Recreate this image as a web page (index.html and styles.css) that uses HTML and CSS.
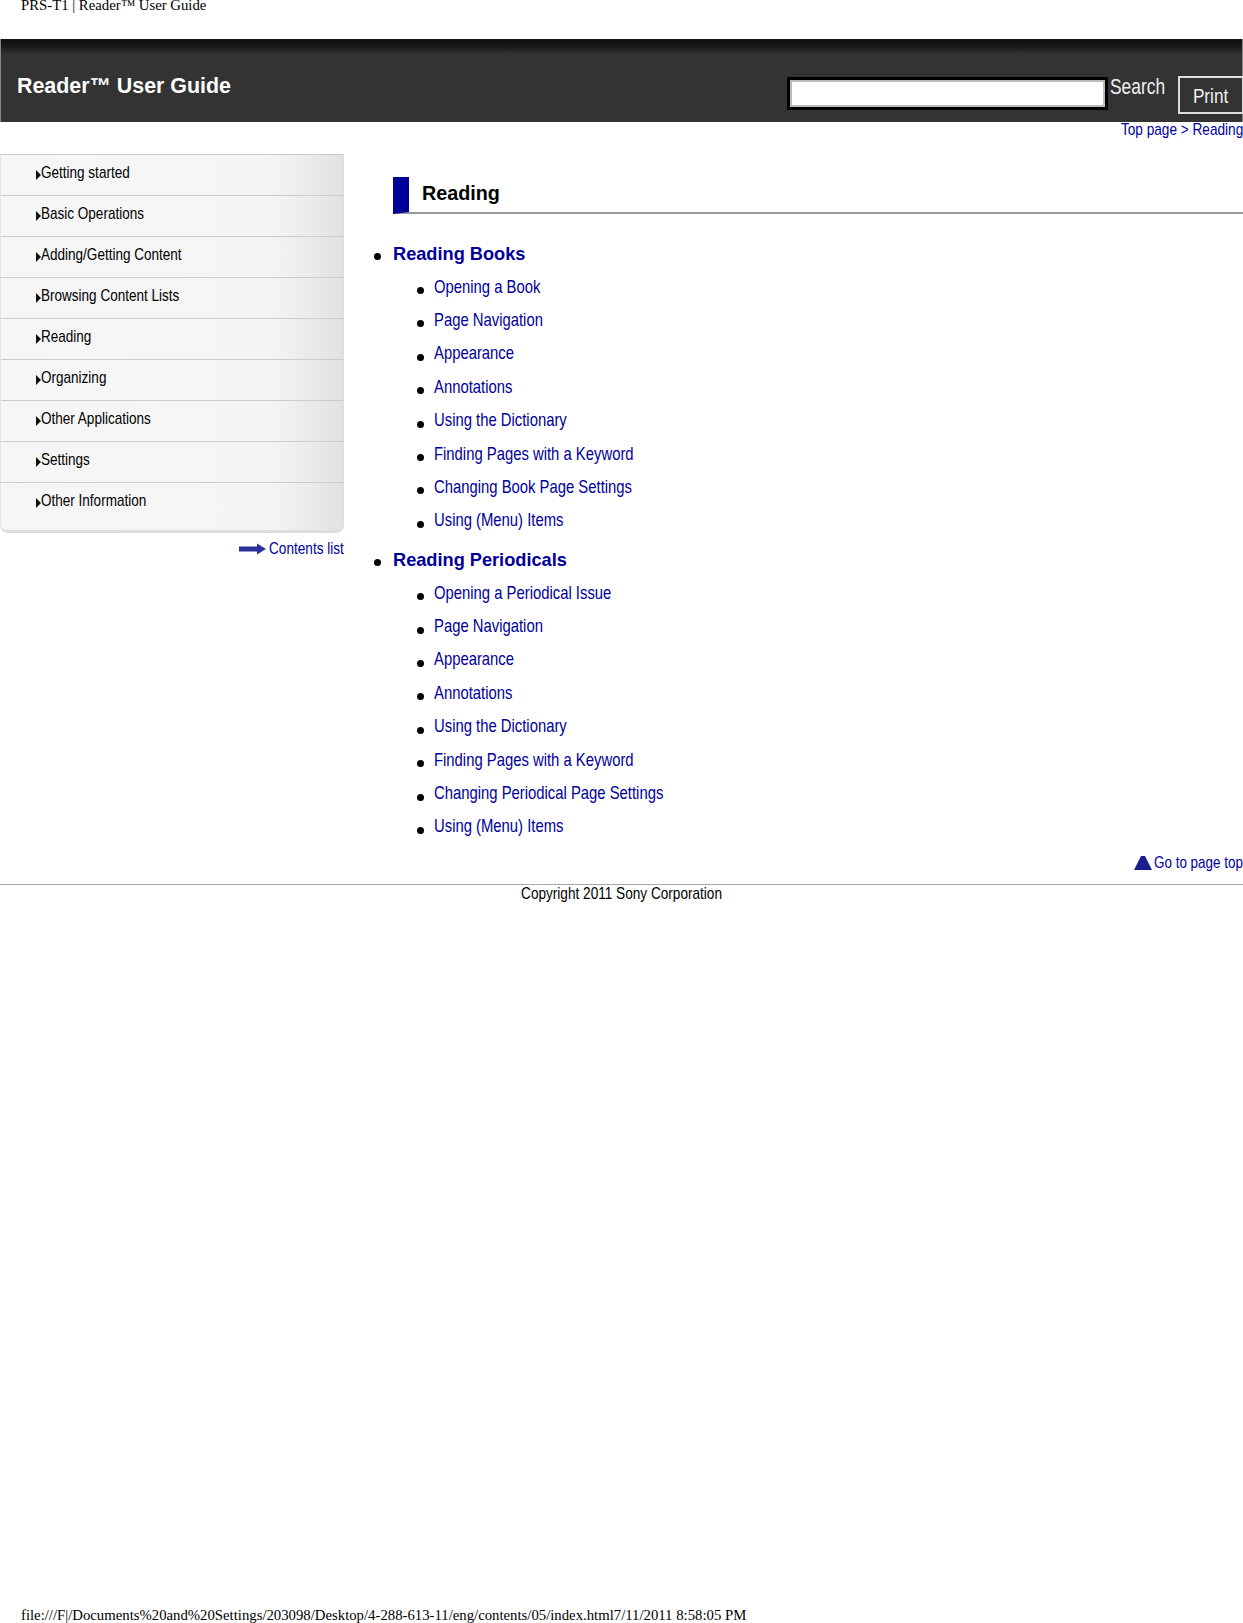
FILE: index.html
```html
<!DOCTYPE html>
<html lang="en">
<head>
<meta charset="utf-8">
<title>PRS-T1 | Reader™ User Guide</title>
<link rel="stylesheet" href="styles.css">
</head>
<body>
<div class="doc-title">PRS-T1 | Reader™ User Guide</div>
<header class="banner">
  <div class="brand">Reader™ User Guide</div>
  <form class="tools">
    <input class="search-box" type="text" aria-label="Search">
    <span class="search-label"><span class="narrow">Search</span></span>
    <button class="print" type="button"><span class="narrow mid">Print</span></button>
  </form>
</header>
<nav class="crumbs"><span class="narrow"><a href="#">Top page</a> &gt; <a href="#">Reading</a></span></nav>
<div class="columns">
  <aside class="side">
    <ul class="menu">
      <li><svg class="tri" viewBox="0 0 5 10"><path d="M0 0L5 5L0 10Z"/></svg><span class="narrow">Getting started</span></li>
      <li><svg class="tri" viewBox="0 0 5 10"><path d="M0 0L5 5L0 10Z"/></svg><span class="narrow">Basic Operations</span></li>
      <li><svg class="tri" viewBox="0 0 5 10"><path d="M0 0L5 5L0 10Z"/></svg><span class="narrow">Adding/Getting Content</span></li>
      <li><svg class="tri" viewBox="0 0 5 10"><path d="M0 0L5 5L0 10Z"/></svg><span class="narrow">Browsing Content Lists</span></li>
      <li><svg class="tri" viewBox="0 0 5 10"><path d="M0 0L5 5L0 10Z"/></svg><span class="narrow">Reading</span></li>
      <li><svg class="tri" viewBox="0 0 5 10"><path d="M0 0L5 5L0 10Z"/></svg><span class="narrow">Organizing</span></li>
      <li><svg class="tri" viewBox="0 0 5 10"><path d="M0 0L5 5L0 10Z"/></svg><span class="narrow">Other Applications</span></li>
      <li><svg class="tri" viewBox="0 0 5 10"><path d="M0 0L5 5L0 10Z"/></svg><span class="narrow">Settings</span></li>
      <li><svg class="tri" viewBox="0 0 5 10"><path d="M0 0L5 5L0 10Z"/></svg><span class="narrow">Other Information</span></li>
    </ul>
    <div class="contents-link">
      <svg class="arrow" viewBox="0 0 27 12"><path d="M0 3.5H18V0.5L27 6L18 11.5V8.5H0Z"/></svg>
      <span class="contents-text"><a class="narrow" href="#">Contents list</a></span>
    </div>
  </aside>
  <main class="content">
    <h1 class="page-head">Reading</h1>
    <ul class="groups">
      <li>
        <a class="group-title" href="#">Reading Books</a>
        <ul class="items">
          <li><a class="narrow" href="#">Opening a Book</a></li>
          <li><a class="narrow" href="#">Page Navigation</a></li>
          <li><a class="narrow" href="#">Appearance</a></li>
          <li><a class="narrow" href="#">Annotations</a></li>
          <li><a class="narrow" href="#">Using the Dictionary</a></li>
          <li><a class="narrow" href="#">Finding Pages with a Keyword</a></li>
          <li><a class="narrow" href="#">Changing Book Page Settings</a></li>
          <li><a class="narrow" href="#">Using (Menu) Items</a></li>
        </ul>
      </li>
      <li>
        <a class="group-title" href="#">Reading Periodicals</a>
        <ul class="items">
          <li><a class="narrow" href="#">Opening a Periodical Issue</a></li>
          <li><a class="narrow" href="#">Page Navigation</a></li>
          <li><a class="narrow" href="#">Appearance</a></li>
          <li><a class="narrow" href="#">Annotations</a></li>
          <li><a class="narrow" href="#">Using the Dictionary</a></li>
          <li><a class="narrow" href="#">Finding Pages with a Keyword</a></li>
          <li><a class="narrow" href="#">Changing Periodical Page Settings</a></li>
          <li><a class="narrow" href="#">Using (Menu) Items</a></li>
        </ul>
      </li>
    </ul>
  </main>
</div>
<div class="page-top">
  <svg class="up" viewBox="0 0 18 14"><path d="M7 0H11L18 14H0Z"/></svg>
  <span class="top-text"><a class="narrow" href="#">Go to page top</a></span>
</div>
<footer class="copyright"><span class="narrow mid">Copyright 2011 Sony Corporation</span></footer>
<div class="print-foot"><span>file:///F|/Documents%20and%20Settings/203098/Desktop/4-288-613-11/eng/contents/05/index.html</span><span>7/11/2011 8:58:05 PM</span></div>
</body>
</html>
```
FILE: styles.css
```css
html, body { margin: 0; padding: 0; }
body {
  height: 1623px;
  overflow: hidden;
  display: flex;
  flex-direction: column;
  background: #fff;
  color: #000;
  font-family: "Liberation Sans", sans-serif;
  font-size: 16.6px;
}
a { color: #000099; text-decoration: none; }
ul { list-style: none; margin: 0; padding: 0; }

/* No condensed family is installed, so Arial Narrow widths come from a horizontal squeeze */
.narrow {
  display: inline-block;
  white-space: nowrap;
  transform: scaleX(0.82);
  transform-origin: 0 50%;
}
.narrow.mid { transform-origin: 50% 50%; }
.menu .narrow { transform: scaleX(0.815); }
.top-text .narrow { transform: scaleX(0.81); }

.doc-title {
  height: 39px;
  padding-left: 21px;
  font-family: "Liberation Serif", serif;
  font-size: 14.75px;
  line-height: 14px;
  margin-top: -2px;
  margin-bottom: 2px;
}
.banner {
  height: 83px;
  box-sizing: border-box;
  display: flex;
  justify-content: space-between;
  border-left: 1px solid #888;
  border-right: 1px solid #888;
  background: linear-gradient(#111 0, #161616 6px, #333 15px, #333 100%);
  color: #fff;
}
.brand {
  font-weight: bold;
  font-size: 21.4px;
  padding: 35px 0 0 16px;
  line-height: 25px;
}
.tools { display: flex; align-items: flex-start; padding-top: 38px; }
.search-box {
  width: 321px;
  height: 33px;
  box-sizing: border-box;
  margin: 0 2px 0 0;
  padding: 0;
  background: #fff;
  border: 3px solid #000;
  outline: none;
  box-shadow: inset 0 0 0 2px #bbb;
}
.search-label {
  width: 55px;
  font-size: 21.2px;
  line-height: 20px;
  color: #f0f0f0;
  margin-right: 13px;
}
.print {
  width: 66px;
  height: 38px;
  box-sizing: border-box;
  margin: -1px -2px 0 0;
  padding: 2px 0 0;
  background: #333;
  color: #f0f0f0;
  border: 2px solid #ddd;
  font-family: inherit;
  font-size: 21px;
}
.crumbs { display: flex; justify-content: flex-end; line-height: 16px; color: #000099; }
.crumbs .narrow { width: 122px; }
.columns { display: flex; margin-top: 16px; }
.side { width: 344px; flex: none; }
.menu {
  background: linear-gradient(90deg, #f6f6f6 0, #f5f5f5 78%, #e2e2e2 100%);
  border-top: 1px solid #ccc;
  border-right: 1px solid #ddd;
  border-left: 1px solid #e4e4e4;
  border-bottom: 3px solid #ddd;
  border-radius: 0 0 8px 8px;
  box-sizing: border-box;
  height: 379px;
}
.menu li {
  height: 41px;
  box-sizing: border-box;
  padding: 9px 0 0 35px;
  line-height: 18px;
  border-bottom: 1px solid #ccc;
  display: flex;
  align-items: flex-start;
}
.menu li:last-child { border-bottom: 0; }
.tri { width: 5px; height: 10px; margin-top: 6px; fill: #111; flex: none; }
.contents-link {
  display: flex;
  justify-content: flex-end;
  align-items: center;
  gap: 3px;
  height: 20px;
  margin-top: 6px;
}
.contents-text { width: 75.5px; }
.arrow { width: 27px; height: 12px; fill: #2b2f9c; }
.content { flex: 1; min-width: 0; padding-top: 23px; }
.page-head {
  margin: 0 0 0 49px;
  height: 37px;
  box-sizing: border-box;
  border-bottom: 2px solid #999;
  border-left: 16px solid #000099;
  padding: 4px 0 0 13px;
  font-size: 19.75px;
  line-height: 25px;
}
.groups { margin-top: 29px; }
.groups > li { padding-left: 49px; position: relative; margin-bottom: 4.4px; }
.groups > li::before, .items li::before {
  content: "";
  position: absolute;
  width: 7px;
  height: 7px;
  border-radius: 50%;
  background: #000;
}
.groups > li::before { left: 30px; top: 10px; }
.group-title {
  display: block;
  font-weight: bold;
  font-size: 18.2px;
  line-height: 22px;
}
.items { margin-top: 12.6px; font-size: 18.1px; }
.items li { position: relative; padding-left: 41px; height: 33.4px; line-height: 18px; }
.items li::before { left: 24px; top: 9.5px; }
.page-top {
  display: flex;
  justify-content: flex-end;
  align-items: center;
  gap: 2px;
  height: 20px;
  margin-top: -2px;
}
.top-text { width: 89px; }
.up { width: 18px; height: 14px; fill: #1a1f8f; }
.copyright {
  border-top: 1px solid #aaa;
  margin-top: 11px;
  text-align: center;
  line-height: 18px;
}
.print-foot {
  margin-top: auto;
  padding: 0 0 0 21px;
  font-family: "Liberation Serif", serif;
  font-size: 14.75px;
  line-height: 16px;
}
```
